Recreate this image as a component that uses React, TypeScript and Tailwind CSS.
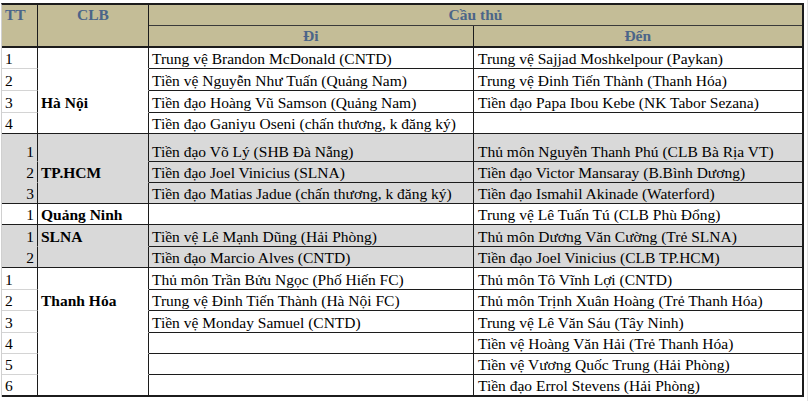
import React from 'react'

type Line = { tt: string; di: string; den: string; h: 21 | 22 | 28 }
type Group = { club: string; clubAt: number; gray?: boolean; right?: boolean; rows: Line[] }

const groups: Group[] = [
  {
    club: 'Hà Nội',
    clubAt: 2,
    rows: [
      { tt: '1', di: 'Trung vệ Brandon McDonald (CNTD)', den: 'Trung vệ Sajjad Moshkelpour (Paykan)', h: 21 },
      { tt: '2', di: 'Tiền vệ Nguyễn Như Tuấn (Quảng Nam)', den: 'Trung vệ Đinh Tiến Thành (Thanh Hóa)', h: 22 },
      { tt: '3', di: 'Tiền đạo Hoàng Vũ Samson (Quảng Nam)', den: 'Tiền đạo Papa Ibou Kebe (NK Tabor Sezana)', h: 22 },
      { tt: '4', di: 'Tiền đạo Ganiyu Oseni (chấn thương, k đăng ký)', den: '', h: 21 },
    ],
  },
  {
    club: 'TP.HCM',
    clubAt: 1,
    gray: true,
    right: true,
    rows: [
      { tt: '1', di: 'Tiền đạo Võ Lý (SHB Đà Nẵng)', den: 'Thủ môn Nguyễn Thanh Phú (CLB Bà Rịa VT)', h: 28 },
      { tt: '2', di: 'Tiền đạo Joel Vinicius (SLNA)', den: 'Tiền đạo Victor Mansaray (B.Bình Dương)', h: 21 },
      { tt: '3', di: 'Tiền đạo Matias Jadue (chấn thương, k đăng ký)', den: 'Tiền đạo Ismahil Akinade (Waterford)', h: 21 },
    ],
  },
  {
    club: 'Quảng Ninh',
    clubAt: 0,
    right: true,
    rows: [{ tt: '1', di: '', den: 'Trung vệ Lê Tuấn Tú (CLB Phù Đổng)', h: 21 }],
  },
  {
    club: 'SLNA',
    clubAt: 0,
    gray: true,
    right: true,
    rows: [
      { tt: '1', di: 'Tiền vệ Lê Mạnh Dũng (Hải Phòng)', den: 'Thủ môn Dương Văn Cường (Trẻ SLNA)', h: 22 },
      { tt: '2', di: 'Tiền đạo Marcio Alves (CNTD)', den: 'Tiền đạo Joel Vinicius (CLB TP.HCM)', h: 21 },
    ],
  },
  {
    club: 'Thanh Hóa',
    clubAt: 1,
    rows: [
      { tt: '1', di: 'Thủ môn Trần Bửu Ngọc (Phố Hiến FC)', den: 'Thủ môn Tô Vĩnh Lợi (CNTD)', h: 22 },
      { tt: '2', di: 'Trung vệ Đinh Tiến Thành (Hà Nội FC)', den: 'Thủ môn Trịnh Xuân Hoàng (Trẻ Thanh Hóa)', h: 21 },
      { tt: '3', di: 'Tiền vệ Monday Samuel (CNTD)', den: 'Trung vệ Lê Văn Sáu (Tây Ninh)', h: 22 },
      { tt: '4', di: '', den: 'Tiền vệ Hoàng Văn Hải (Trẻ Thanh Hóa)', h: 21 },
      { tt: '5', di: '', den: 'Tiền vệ Vương Quốc Trung (Hải Phòng)', h: 21 },
      { tt: '6', di: '', den: 'Tiền đạo Errol Stevens (Hải Phòng)', h: 22 },
    ],
  },
]

const heights = { 21: 'h-[21px]', 22: 'h-[22px]', 28: 'h-[28px]' }

const App = () => {
  return (
    <div
      className="flex h-[401px] w-[810px] overflow-hidden bg-white text-[15.5px] text-black"
      style={{ fontFamily: '"Liberation Serif", "Times New Roman", serif' }}
    >
      <div className="ml-[1px] mt-[3px] h-fit w-[803px] shrink-0 border-l border-l-[#d0d0d0] border-t-2 border-t-[#1c1c1c]">
        {/* header */}
        <div className="flex h-[43px] border-b-2 border-b-[#1c1c1c] bg-[#c4bd97] font-bold text-[#4b6589]">
          <div className="w-[36px] shrink-0 border-r border-r-[#1c1c1c] pl-[3px] leading-[20px]">TT</div>
          <div className="w-[111px] shrink-0 border-r border-r-[#1c1c1c] text-center leading-[20px]">CLB</div>
          <div className="flex w-[655px] shrink-0 flex-col border-r-2 border-r-[#1c1c1c]">
            <div className="h-[21px] border-b border-b-[#3a3a3a] text-center leading-[20px]">Cầu thủ</div>
            <div className="flex h-[20px]">
              <div className="w-[325px] border-r border-r-[#1c1c1c] text-center leading-[20px]">Đi</div>
              <div className="w-[329px] text-center leading-[20px]">Đến</div>
            </div>
          </div>
        </div>

        {/* body */}
        {groups.map((g, gi) =>
          g.rows.map((r, ri) => {
            const last = ri === g.rows.length - 1
            const end = last && gi === groups.length - 1
            const bottom = end ? 'border-b-2 border-b-[#1c1c1c]' : last ? 'border-b border-b-[#1c1c1c]' : ''
            const ttLine = last ? bottom : g.gray ? 'border-b border-b-transparent' : 'border-b border-b-[#d4d4d4]'
            const clbLine = last ? bottom : 'border-b border-b-transparent'
            const cellLine = end ? 'border-b-2 border-b-[#1c1c1c]' : 'border-b border-b-[#1c1c1c]'
            return (
              <div
                key={`${gi}-${ri}`}
                className={`flex whitespace-nowrap leading-[18px] ${heights[r.h]} ${g.gray ? 'bg-[#d9d9d9]' : 'bg-white'}`}
              >
                <div
                  className={`flex w-[36px] shrink-0 items-end border-r border-r-[#1c1c1c] ${ttLine} ${
                    g.right ? 'justify-end pr-[3px]' : 'pl-[3px]'
                  }`}
                >
                  {r.tt}
                </div>
                <div className={`flex w-[111px] shrink-0 items-end border-r border-r-[#1c1c1c] pl-[3px] font-bold ${clbLine}`}>
                  {ri === g.clubAt ? g.club : ''}
                </div>
                <div className={`flex w-[325px] shrink-0 items-end border-r border-r-[#1c1c1c] pl-[3px] ${cellLine}`}>
                  {r.di}
                </div>
                <div className={`flex w-[330px] shrink-0 items-end border-r-2 border-r-[#1c1c1c] pl-[4px] ${cellLine}`}>
                  {r.den}
                </div>
              </div>
            )
          })
        )}
      </div>
      {/* spreadsheet gridline beyond the table */}
      <div className="ml-[3px] h-full w-px bg-[#e2e2e2]" />
    </div>
  )
}

export default App
